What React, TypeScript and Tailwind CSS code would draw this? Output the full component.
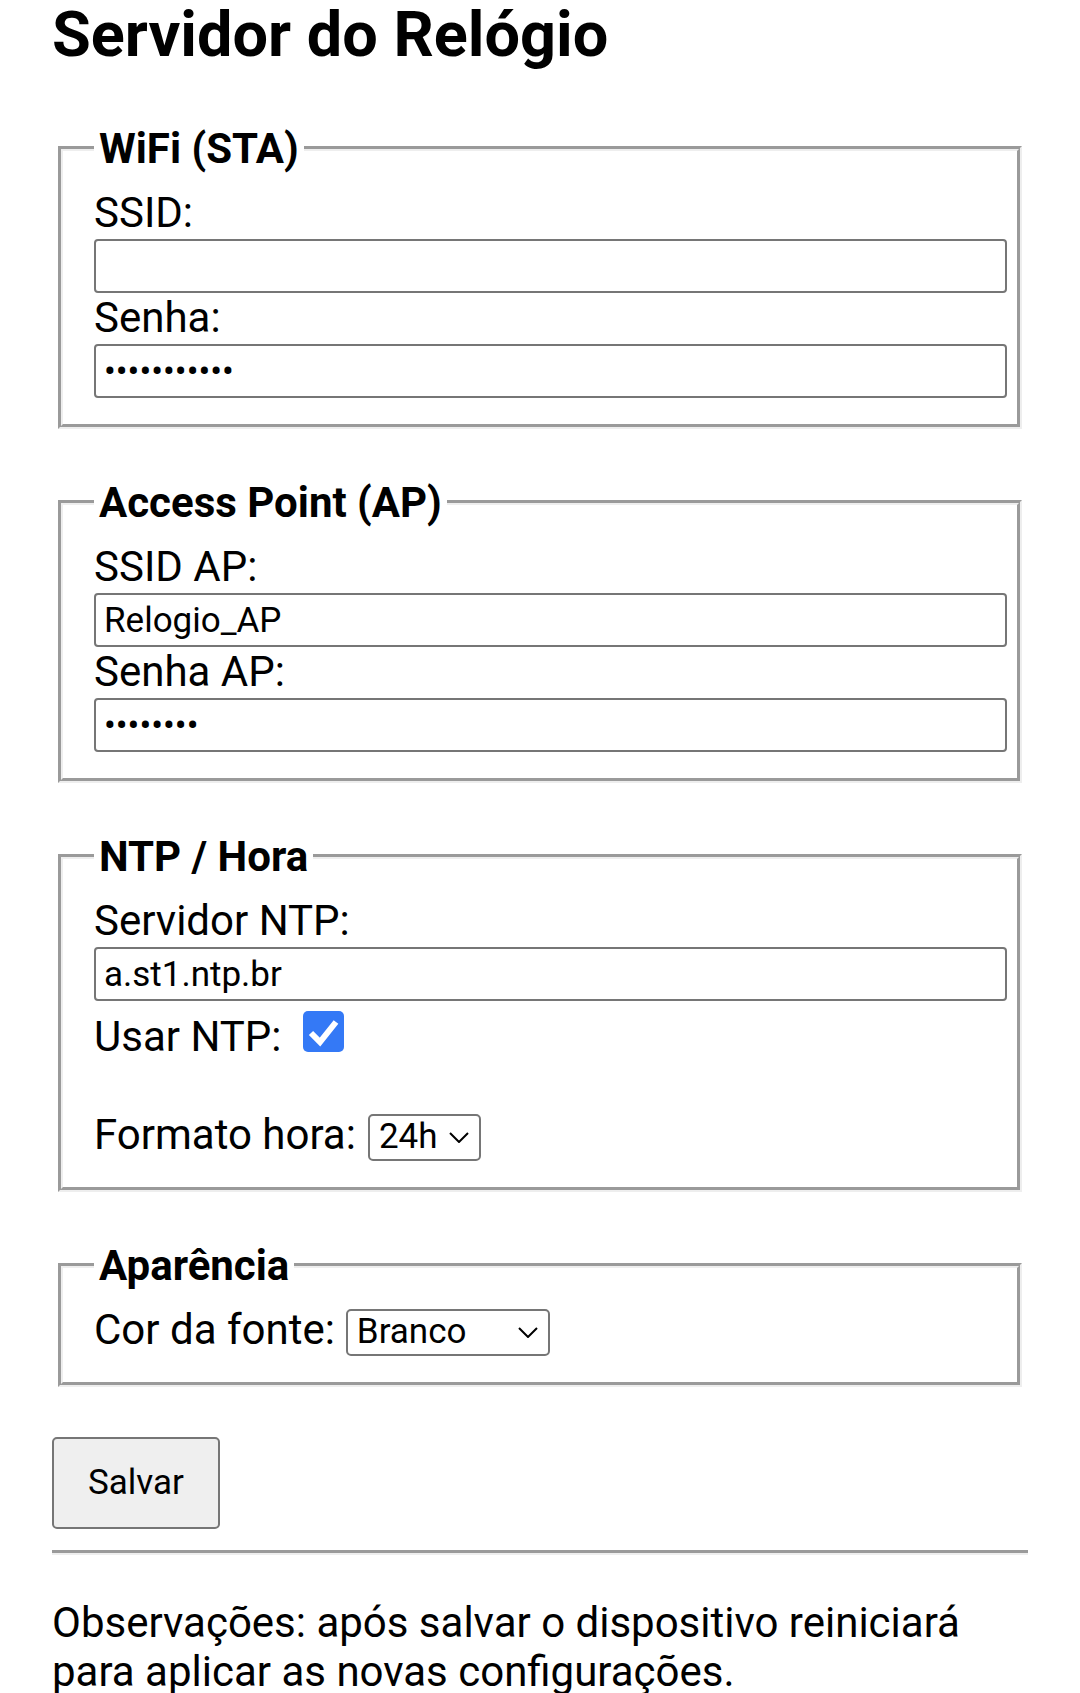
import type { ReactNode } from 'react'

// Fieldset with the legend cut into the groove border, like the browser default
function Group({ title, children }: { title: string; children: ReactNode }) {
  return (
    <fieldset className="mx-[6px] mb-[49px] border-[5px] [border-style:groove] border-[#eeeeee] px-[31px] pt-[15px] pb-[26px]">
      <legend className="px-[5px] text-[42px] font-bold leading-[49px]">{title}</legend>
      {children}
    </fieldset>
  )
}

function Field({ label, value, type = 'text' }: { label: string; value: string; type?: string }) {
  return (
    <>
      <label className="block leading-[49px]">{label}</label>
      <input
        type={type}
        defaultValue={value}
        readOnly
        className="mt-[2px] block h-[54px] w-[calc(100%+21px)] rounded-[4px] border-2 border-[#767676] bg-white px-[8px] text-[35px] leading-normal text-black outline-none"
      />
    </>
  )
}

function Chevron() {
  return (
    <svg width="20" height="11" viewBox="0 0 20 11" fill="none" stroke="#000" strokeWidth="2">
      <path d="M1 1 L10 10 L19 1" />
    </svg>
  )
}

function FakeSelect({ value, width }: { value: string; width: string }) {
  return (
    <div
      className={`flex h-[47px] items-center justify-between rounded-[5px] border-2 border-[#767676] bg-white pl-[9px] pr-[10px] text-[35px] leading-normal ${width}`}
    >
      <span>{value}</span>
      <Chevron />
    </div>
  )
}

export default function App() {
  return (
    <div className="min-h-screen bg-white px-[52px] font-[Roboto,sans-serif] text-[42px] text-black">
      <h2 className="-mt-[2px] mb-[52px] text-[63px] font-bold leading-[74px]">Servidor do Relógio</h2>

      <form>
        <Group title="WiFi (STA)">
          <Field label="SSID:" value="" />
          <Field label="Senha:" value="minhasenha1" type="password" />
        </Group>

        <Group title="Access Point (AP)">
          <Field label="SSID AP:" value="Relogio_AP" />
          <Field label="Senha AP:" value="12345678" type="password" />
        </Group>

        <Group title="NTP / Hora">
          <Field label="Servidor NTP:" value="a.st1.ntp.br" />

          {/* Usar NTP checkbox */}
          <div className="mt-[11px] flex items-start">
            <span className="leading-[49px]">Usar NTP:</span>
            <span className="-mt-[1px] ml-[21px] flex h-[41px] w-[41px] items-center justify-center rounded-[5px] bg-[#3479f6]">
              <svg width="41" height="41" viewBox="0 0 41 41" fill="none" stroke="#fff" strokeWidth="6">
                <polyline points="8,22 17,31 33,11" />
              </svg>
            </span>
          </div>

          <div className="mt-[49px] flex items-start gap-[12px]">
            <span className="leading-[49px]">Formato hora:</span>
            <div className="mt-[4px]">
              <FakeSelect value="24h" width="w-[113px]" />
            </div>
          </div>
        </Group>

        <Group title="Aparência">
          <div className="flex items-start gap-[11px]">
            <span className="leading-[49px]">Cor da fonte:</span>
            <div className="mt-[4px]">
              <FakeSelect value="Branco" width="w-[204px]" />
            </div>
          </div>
        </Group>

        <div className="flex">
          <button
            type="button"
            className="mt-[1px] h-[92px] w-[168px] rounded-[5px] border-2 border-[#767676] bg-[#efefef] text-[35px] leading-normal text-black"
          >
            Salvar
          </button>
        </div>
      </form>

      <hr className="mt-[21px] border-t-[3px] border-b-[2px] border-t-[#9a9a9a] border-b-[#eeeeee]" />

      <p className="mt-[43px] leading-[49px]">
        Observações: após salvar o dispositivo reiniciará para aplicar as novas configurações.
      </p>
    </div>
  )
}
